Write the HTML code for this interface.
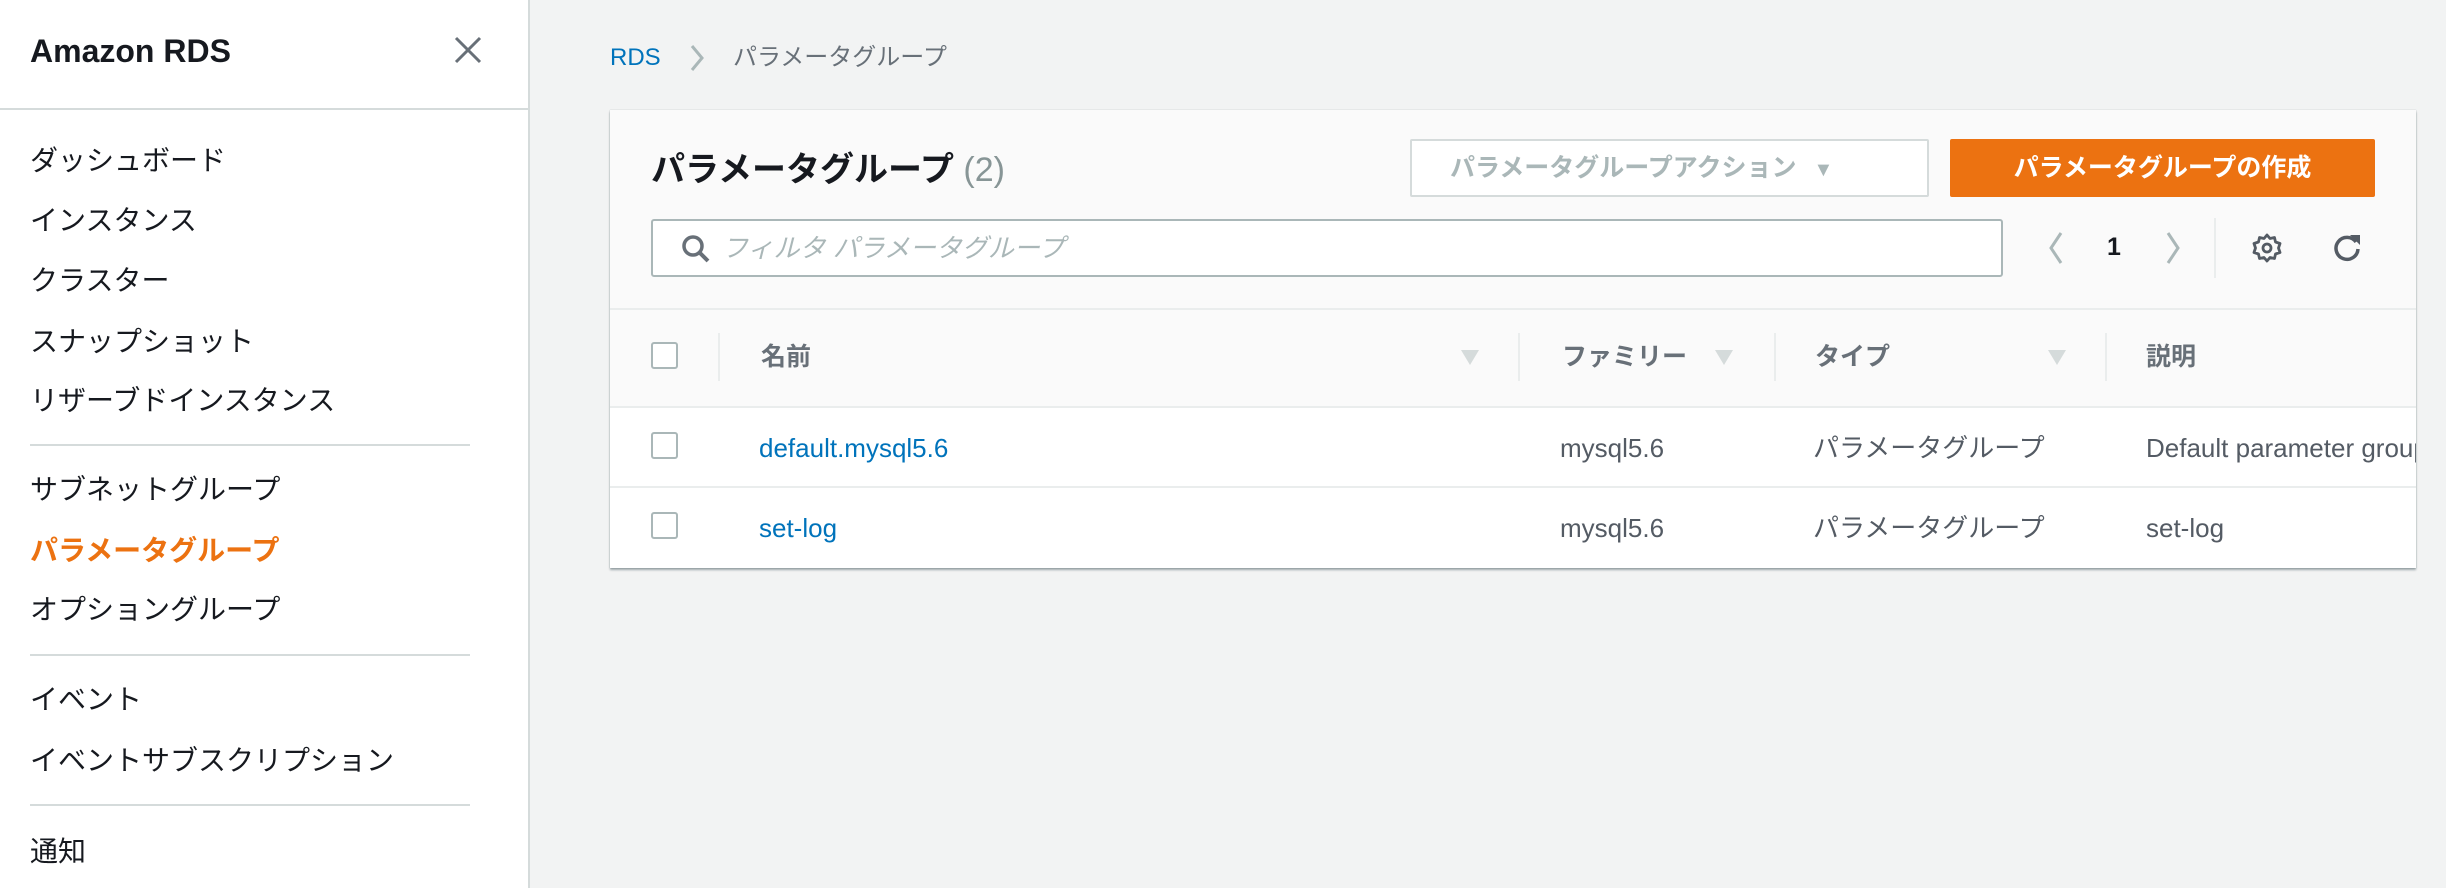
<!DOCTYPE html>
<html><head><meta charset="utf-8"><style>
*{margin:0;padding:0;box-sizing:border-box}
body{width:2446px;height:888px;overflow:hidden;background:#f2f3f3;font-family:"Liberation Sans","Noto Sans CJK JP",sans-serif;position:relative;color:#16191f}
.a{position:absolute;white-space:nowrap}
#side{position:absolute;left:0;top:0;width:530px;height:888px;background:#fff;border-right:2px solid #d5dbdb}
.mi{position:absolute;left:30px;font-size:28px;line-height:36px;color:#16191f}
.hr{position:absolute;left:30px;width:440px;height:2px;background:#d5dbdb}
#card{position:absolute;left:610px;top:110px;width:1806px;height:458px;background:#fafafa;box-shadow:0 2px 2px rgba(0,28,36,.35),0 0 1px rgba(0,28,36,.25);overflow:hidden}
.cb{position:absolute;width:27px;height:27px;border:2px solid #aab7b8;border-radius:3px;background:#fff}
.th{font-size:25px;font-weight:bold;color:#687078;line-height:30px}
.vd{position:absolute;width:2px;height:48px;background:#eaeded}
.tri{position:absolute;width:0;height:0;border-left:9px solid transparent;border-right:9px solid transparent;border-top:15px solid #d5dbdb}
.td{font-size:26px;color:#545b64;line-height:30px}
.lk{font-size:26px;color:#0073bb;line-height:30px}
</style></head><body>
<div id="side">
<div class="a" style="left:30px;top:31px;font-size:32px;font-weight:bold;line-height:40px">Amazon RDS</div>
<svg class="a" style="left:454px;top:36px" width="28" height="28" viewBox="0 0 28 28"><path d="M2 2L26 26M26 2L2 26" stroke="#687078" stroke-width="3"/></svg>
<div style="position:absolute;left:0;top:108px;width:530px;height:2px;background:#d5dbdb"></div>
<div class="mi" style="top:143px">ダッシュボード</div>
<div class="mi" style="top:203px">インスタンス</div>
<div class="mi" style="top:263px">クラスター</div>
<div class="mi" style="top:324px">スナップショット</div>
<div class="mi" style="top:383px">リザーブドインスタンス</div>
<div class="hr" style="top:444px"></div>
<div class="mi" style="top:472px">サブネットグループ</div>
<div class="mi" style="top:533px;color:#ec7211;font-weight:bold">パラメータグループ</div>
<div class="mi" style="top:592px">オプショングループ</div>
<div class="hr" style="top:654px"></div>
<div class="mi" style="top:682px">イベント</div>
<div class="mi" style="top:743px">イベントサブスクリプション</div>
<div class="hr" style="top:804px"></div>
<div class="mi" style="top:834px">通知</div>
</div>

<div class="a" style="left:610px;top:43px;font-size:24px;color:#0073bb;line-height:30px">RDS</div>
<svg class="a" style="left:688px;top:43px" width="18" height="30" viewBox="0 0 18 30"><path d="M4 3L14 15L4 27" stroke="#aab7b8" stroke-width="3" fill="none"/></svg>
<div class="a" style="left:733px;top:43px;font-size:24px;color:#687078;line-height:30px">パラメータグループ</div>

<div id="card">
<div class="a" style="left:41px;top:38px;font-size:34px;font-weight:bold;line-height:44px">パラメータグループ <span style="font-weight:normal;color:#879596">(2)</span></div>
<div class="a" style="left:800px;top:29px;width:519px;height:58px;border:2px solid #d5dbdb;border-radius:2px;background:#fff;font-size:25px;font-weight:bold;color:#aab7b8;line-height:54px;padding-left:38px">パラメータグループアクション <span style="font-size:20px;margin-left:10px">▼</span></div>
<div class="a" style="left:1340px;top:29px;width:425px;height:58px;background:#ec7211;border-radius:2px;font-size:25px;font-weight:bold;color:#fff;line-height:58px;text-align:center">パラメータグループの作成</div>
<div class="a" style="left:41px;top:109px;width:1352px;height:58px;border:2px solid #aab7b8;border-radius:3px;background:#fff"></div>
<svg class="a" style="left:70px;top:123px" width="32" height="32" viewBox="0 0 32 32"><circle cx="13" cy="13" r="9" stroke="#687078" stroke-width="3.5" fill="none"/><path d="M19.5 19.5L28 28" stroke="#687078" stroke-width="4"/></svg>
<div class="a" style="left:112px;top:123px;font-size:26px;font-style:italic;color:#aab7b8;line-height:30px">フィルタ パラメータグループ</div>
<svg class="a" style="left:1436px;top:120px" width="20" height="36" viewBox="0 0 20 36"><path d="M15 3L5 18L15 33" stroke="#aab7b8" stroke-width="3" fill="none"/></svg>
<div class="a" style="left:1497px;top:121px;font-size:25px;font-weight:bold;line-height:32px">1</div>
<svg class="a" style="left:1553px;top:120px" width="20" height="36" viewBox="0 0 20 36"><path d="M5 3L15 18L5 33" stroke="#aab7b8" stroke-width="3" fill="none"/></svg>
<div class="vd" style="left:1604px;top:108px;height:60px"></div>
<svg class="a" style="left:1641px;top:122px" width="32" height="32" viewBox="0 0 32 32"><path d="M16 3l3 3.5 4.5-1 1 4.5 4.5 1.5-1.5 4.5 1.5 4.5-4.5 1.5-1 4.5-4.5-1-3 3.5-3-3.5-4.5 1-1-4.5-4.5-1.5 1.5-4.5-1.5-4.5 4.5-1.5 1-4.5 4.5 1z" stroke="#545b64" stroke-width="2.8" fill="none" stroke-linejoin="round"/><circle cx="16" cy="16" r="4" stroke="#545b64" stroke-width="2.8" fill="none"/></svg>
<svg class="a" style="left:1721px;top:122px" width="32" height="32" viewBox="0 0 32 32"><path d="M25 10A11 11 0 1 0 27 17" stroke="#545b64" stroke-width="3.5" fill="none"/><path d="M19 3H29V13Z" fill="#545b64"/></svg>

<div class="a" style="left:0;top:198px;width:1806px;height:2px;background:#eaeded"></div>
<div class="cb" style="left:41px;top:232px"></div>
<div class="vd" style="left:108px;top:223px"></div>
<div class="a th" style="left:151px;top:232px">名前</div>
<div class="tri" style="left:851px;top:240px"></div>
<div class="vd" style="left:908px;top:223px"></div>
<div class="a th" style="left:952px;top:232px">ファミリー</div>
<div class="tri" style="left:1105px;top:240px"></div>
<div class="vd" style="left:1164px;top:223px"></div>
<div class="a th" style="left:1205px;top:232px">タイプ</div>
<div class="tri" style="left:1438px;top:240px"></div>
<div class="vd" style="left:1495px;top:223px"></div>
<div class="a th" style="left:1536px;top:232px">説明</div>

<div class="a" style="left:0;top:296px;width:1806px;height:162px;background:#fff"></div>
<div class="a" style="left:0;top:296px;width:1806px;height:2px;background:#eaeded"></div>
<div class="a" style="left:0;top:376px;width:1806px;height:2px;background:#eaeded"></div>
<div class="cb" style="left:41px;top:322px"></div>
<div class="a lk" style="left:149px;top:323px">default.mysql5.6</div>
<div class="a td" style="left:950px;top:323px">mysql5.6</div>
<div class="a td" style="left:1203px;top:323px">パラメータグループ</div>
<div class="a td" style="left:1536px;top:323px">Default parameter group for mysql5.6</div>
<div class="cb" style="left:41px;top:402px"></div>
<div class="a lk" style="left:149px;top:403px">set-log</div>
<div class="a td" style="left:950px;top:403px">mysql5.6</div>
<div class="a td" style="left:1203px;top:403px">パラメータグループ</div>
<div class="a td" style="left:1536px;top:403px">set-log</div>
</div>
</body></html>
